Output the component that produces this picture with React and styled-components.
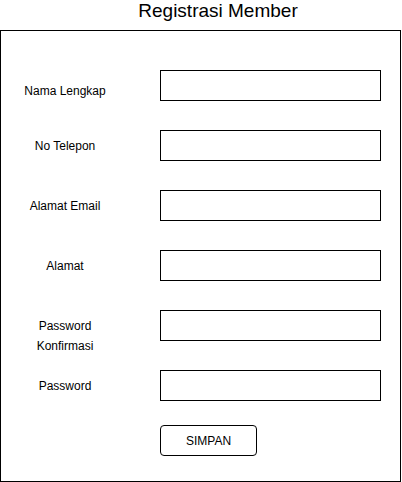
import React from "react";
import styled, { createGlobalStyle } from "styled-components";

const Global = createGlobalStyle`
  html, body { margin: 0; padding: 0; background: #fff; }
  body { font-family: "Liberation Sans", Arial, sans-serif; color: #000; }
  * { box-sizing: border-box; }
`;

const Page = styled.div`
  width: 402px;
  height: 482px;
  display: flex;
  flex-direction: column;
`;

const Title = styled.h1`
  margin: 0;
  height: 30px;
  padding: 0 0 0 34px;
  font-size: 19px;
  font-weight: normal;
  line-height: 22px;
  text-align: center;
`;

const Panel = styled.div`
  width: 401px;
  height: 452px;
  border: 1px solid #000;
  padding-top: 39px;
  display: flex;
  flex-direction: column;
`;

const Form = styled.div`
  display: grid;
  grid-template-columns: 128px 221px;
  grid-auto-rows: 31px;
  column-gap: 31px;
  row-gap: 29px;
`;

const Label = styled.div`
  align-self: start;
  padding-top: ${(p) => p.$drop}px;
  font-size: 12px;
  line-height: 20px;
  text-align: center;
`;

const Field = styled.div`
  height: 31px;
  border: 1px solid #000;
  background: #fff;
`;

const Actions = styled.div`
  display: flex;
  margin-top: 24px;
  padding-left: 159px;
`;

const Button = styled.button`
  width: 97px;
  height: 31px;
  border: 1px solid #000;
  border-radius: 4px;
  background: #fff;
  font-family: "Liberation Sans", Arial, sans-serif;
  font-size: 12px;
  color: #000;
  padding: 0;
`;

const rows = [
  { label: ["Nama Lengkap"], drop: 11 },
  { label: ["No Telepon"], drop: 6 },
  { label: ["Alamat Email"], drop: 6 },
  { label: ["Alamat"], drop: 6 },
  { label: ["Password", "Konfirmasi"], drop: 6 },
  { label: ["Password"], drop: 6 },
];

export default function App() {
  return (
    <Page>
      <Global />
      <Title>Registrasi Member</Title>
      <Panel>
        <Form>
          {rows.map((r, i) => (
            <React.Fragment key={i}>
              <Label $drop={r.drop}>
                {r.label.map((l, j) => (
                  <div key={j}>{l}</div>
                ))}
              </Label>
              <Field />
            </React.Fragment>
          ))}
        </Form>
        <Actions>
          <Button>SIMPAN</Button>
        </Actions>
      </Panel>
    </Page>
  );
}
